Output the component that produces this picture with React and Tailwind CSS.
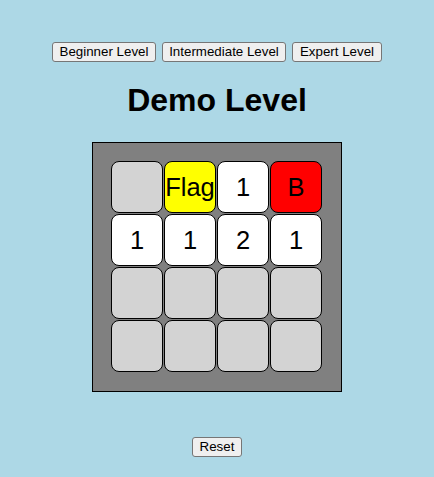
import React from 'react';

const cells = [
    { text: '', bg: 'bg-[#d3d3d3]' },
    { text: 'Flag', bg: 'bg-[#ffff00]' },
    { text: '1', bg: 'bg-white' },
    { text: 'B', bg: 'bg-[#ff0000]' },
    { text: '1', bg: 'bg-white' },
    { text: '1', bg: 'bg-white' },
    { text: '2', bg: 'bg-white' },
    { text: '1', bg: 'bg-white' },
    { text: '', bg: 'bg-[#d3d3d3]' },
    { text: '', bg: 'bg-[#d3d3d3]' },
    { text: '', bg: 'bg-[#d3d3d3]' },
    { text: '', bg: 'bg-[#d3d3d3]' },
    { text: '', bg: 'bg-[#d3d3d3]' },
    { text: '', bg: 'bg-[#d3d3d3]' },
    { text: '', bg: 'bg-[#d3d3d3]' },
    { text: '', bg: 'bg-[#d3d3d3]' },
];

const btn = 'h-[20px] px-[6px] text-[13.33px] leading-[16px] bg-[#efefef] border border-[#767676] rounded-[3px] text-black';

const App = () => {
    return (
        <div className="min-h-[477px] w-full bg-[#add8e6] flex flex-col items-center pt-[42px] font-['Liberation_Sans',Arial,sans-serif]">
            <div className="flex gap-[6px]">
                <button className={`${btn} w-[104px]`}>Beginner Level</button>
                <button className={`${btn} w-[124px]`}>Intermediate Level</button>
                <button className={`${btn} w-[90px]`}>Expert Level</button>
            </div>

            <h1 className="mt-[20px] text-[32px] leading-[37px] font-bold text-black">Demo Level</h1>

            <div className="mt-[23px] w-[250px] h-[250px] bg-[#808080] border border-black pt-[18px] pl-[18px]">
                <div className="grid grid-cols-[repeat(4,52px)] grid-rows-[repeat(4,52px)] gap-[1px]">
                    {cells.map((c, i) => (
                        <div
                            key={i}
                            className={`${c.bg} border border-black rounded-[8px] flex items-center justify-center text-[25.5px] text-black`}
                        >
                            {c.text}
                        </div>
                    ))}
                </div>
            </div>

            <button className={`${btn} mt-[45px] w-[50px]`}>Reset</button>
        </div>
    );
};

export default App;
